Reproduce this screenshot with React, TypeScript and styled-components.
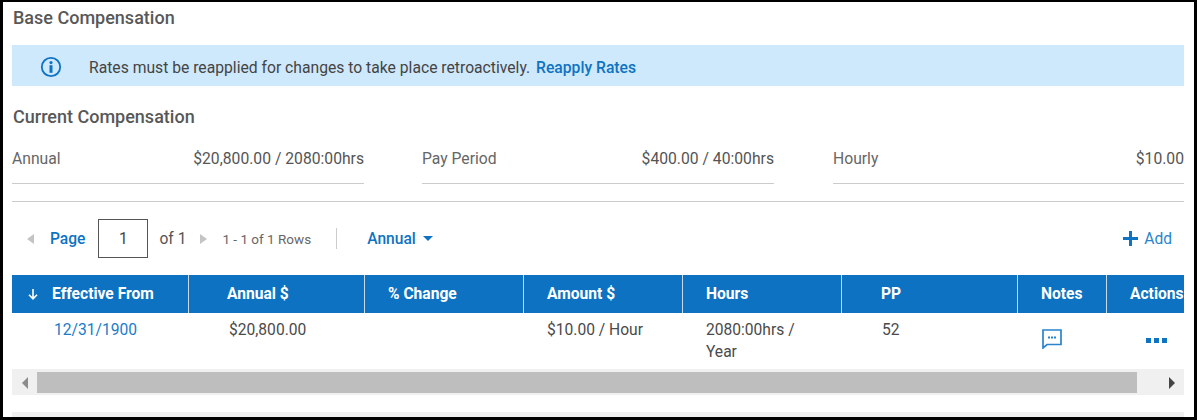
import { createGlobalStyle } from "styled-components";
import styled from "styled-components";

const GlobalStyle = createGlobalStyle`
    html, body {
        margin: 0;
        padding: 0;
        background: #fff;
    }
    body {
        font-family: Roboto, "Liberation Sans", sans-serif;
        color: #444;
    }
`;

const Frame = styled.div`
    box-sizing: border-box;
    width: 1197px;
    height: 420px;
    overflow: hidden;
    border: solid #000;
    border-width: 2px 3px 3px 3px;
    padding: 0 10px 0 9px;
    display: flex;
    flex-direction: column;
`;

const PageTitle = styled.h2`
    margin: 0;
    height: 33px;
    padding: 6px 0 0 1px;
    box-sizing: border-box;
    font-size: 18px;
    line-height: 20px;
    font-weight: 500;
    color: #585858;
`;

const Banner = styled.div`
    box-sizing: border-box;
    margin-top: 10px;
    height: 41px;
    background: #cee8fc;
    display: flex;
    align-items: center;
    padding: 3px 0 0 28px;
    font-size: 15.7px;
    color: #444;
`;

const BannerIcon = styled.svg`
    width: 22px;
    height: 22px;
    margin-right: 27px;
    flex: none;
`;

const LinkText = styled.a`
    color: #0e73c2;
    font-weight: ${props => (props.$strong ? 500 : 400)};
    text-decoration: none;
`;

const ReapplyLink = styled(LinkText)`
    margin-left: 2px;
`;

const SectionTitle = styled.h3`
    margin: 21px 0 0;
    padding-left: 1px;
    height: 20px;
    font-size: 18px;
    line-height: 20px;
    font-weight: 500;
    color: #585858;
`;

const Summary = styled.div`
    margin-top: 23px;
    display: grid;
    grid-template-columns: 352px 352px 352px;
    column-gap: 58px;
    width: 1172px;
    overflow: hidden;
    padding-bottom: 17px;
    border-bottom: 1px solid #ccc;
`;

const SummaryItem = styled.div`
    display: flex;
    justify-content: space-between;
    height: 33px;
    border-bottom: 1px solid #ccc;
    font-size: 15.7px;
    line-height: 18px;
    color: #666;
    &:last-child {
        margin-left: 1px;
    }
`;

const SummaryValue = styled.span`
    color: #555;
`;

const Toolbar = styled.div`
    height: 73px;
    display: flex;
    align-items: center;
    font-size: 15.6px;
    color: #555;
`;

const Arrow = styled.span`
    width: 0;
    height: 0;
    border-style: solid;
    border-width: 5px 0;
    border-color: transparent;
    flex: none;
    margin-left: ${props => props.$ml}px;
    ${props => props.$dir === "left"
        ? `border-right: 7px solid #c4c4c4;`
        : `border-left: 7px solid #c4c4c4;`}
`;

const PageLink = styled(LinkText)`
    margin-left: 16px;
`;

const PageInput = styled.div`
    box-sizing: border-box;
    width: 50px;
    height: 39px;
    margin-left: 13px;
    border: 1px solid #555;
    display: flex;
    align-items: center;
    justify-content: center;
    font-size: 15.6px;
    color: #444;
`;

const OfText = styled.span`
    margin-left: 11px;
`;

const RowsText = styled.span`
    margin-left: 15px;
    font-size: 13.5px;
    color: #666;
`;

const Separator = styled.div`
    width: 1px;
    height: 21px;
    background: #ccc;
    margin: 0 30px 0 25px;
`;

const Caret = styled.span`
    width: 0;
    height: 0;
    margin-left: 7px;
    border-style: solid;
    border-width: 5px 5.5px 0;
    border-color: #0e73c2 transparent transparent;
`;

const AddButton = styled.div`
    margin-left: auto;
    margin-right: 12px;
    display: flex;
    align-items: center;
    gap: 6px;
    color: #2a84cc;
`;

const TableWrap = styled.div`
    width: 1172px;
    overflow: hidden;
`;

const Cols = "177px 176px 159px 159px 159px 176px 89px 77px";

const HeaderRow = styled.div`
    display: grid;
    grid-template-columns: ${Cols};
    height: 38px;
    background: #0d72c1;
`;

const HeaderCell = styled.div`
    box-sizing: border-box;
    display: flex;
    align-items: center;
    gap: 13px;
    padding: 0 0 1px ${props => props.$pad}px;
    border-right: 1px solid #c9d9e6;
    font-size: 15.6px;
    font-weight: 700;
    color: #fff;
    white-space: nowrap;
    &:last-child {
        border-right: 0;
    }
`;

const BodyRow = styled.div`
    display: grid;
    grid-template-columns: ${Cols};
    height: 56px;
    font-size: 15.6px;
    line-height: 22px;
    color: #4a4a4a;
`;

const Cell = styled.div`
    box-sizing: border-box;
    padding: 6px 30px 0 ${props => props.$pad}px;
`;

const IconCell = styled.div`
    padding: ${props => props.$top}px 0 0 ${props => props.$pad}px;
`;

const DateLink = styled(LinkText)`
    color: #1a7cc9;
`;

const Dots = styled.div`
    display: flex;
    gap: 3px;
`;

const Dot = styled.span`
    width: 5px;
    height: 5px;
    background: #0e73c2;
`;

const Scrollbar = styled.div`
    box-sizing: border-box;
    height: 26px;
    padding-top: 1px;
    background: #f0f0f0;
    display: flex;
    align-items: center;
`;

const ScrollLeft = styled.div`
    width: 25px;
    display: flex;
    justify-content: center;
    flex: none;
`;

const ScrollThumb = styled.div`
    width: 1100px;
    height: 21px;
    background: #bebebe;
    flex: none;
`;

const ScrollRight = styled.div`
    flex: 1;
    display: flex;
    justify-content: flex-end;
    padding-right: 9px;
`;

const ScrollArrow = styled.span`
    width: 0;
    height: 0;
    border-style: solid;
    border-width: 6px 0;
    border-color: transparent;
    ${props => props.$dir === "left"
        ? `border-right: 6px solid #8c8c8c;`
        : `border-left: 6px solid #444;`}
`;

const BottomStrip = styled.div`
    margin-top: 17px;
    height: 5px;
    width: 1172px;
    background: #f0f0f0;
`;

const columns = [
    { label: "Annual $", pad: 38 },
    { label: "% Change", pad: 23 },
    { label: "Amount $", pad: 23 },
    { label: "Hours", pad: 23 },
    { label: "PP", pad: 39 },
    { label: "Notes", pad: 23 },
    { label: "Actions", pad: 23 },
];

const App = () => {
    return (
        <Frame>
            <GlobalStyle />
            <PageTitle>Base Compensation</PageTitle>
            <Banner>
                <BannerIcon viewBox="0 0 22 22" fill="none">
                    <circle cx="11" cy="11" r="9.2" stroke="#0e73c2" strokeWidth="1.8" />
                    <circle cx="11" cy="6.6" r="1.6" fill="#0e73c2" />
                    <rect x="9.5" y="9.2" width="3" height="7.6" fill="#0e73c2" />
                </BannerIcon>
                <span>
                    Rates must be reapplied for changes to take place retroactively.{" "}
                    <ReapplyLink $strong>Reapply Rates</ReapplyLink>
                </span>
            </Banner>
            <SectionTitle>Current Compensation</SectionTitle>
            <Summary>
                <SummaryItem>
                    <span>Annual</span>
                    <SummaryValue>$20,800.00 / 2080:00hrs</SummaryValue>
                </SummaryItem>
                <SummaryItem>
                    <span>Pay Period</span>
                    <SummaryValue>$400.00 / 40:00hrs</SummaryValue>
                </SummaryItem>
                <SummaryItem>
                    <span>Hourly</span>
                    <SummaryValue>$10.00</SummaryValue>
                </SummaryItem>
            </Summary>
            <Toolbar>
                <Arrow $dir="left" $ml={15} />
                <PageLink $strong>Page</PageLink>
                <PageInput>1</PageInput>
                <OfText>of 1</OfText>
                <Arrow $dir="right" $ml={14} />
                <RowsText>1 - 1 of 1 Rows</RowsText>
                <Separator />
                <LinkText $strong>Annual</LinkText>
                <Caret />
                <AddButton>
                    <svg width="15" height="15" viewBox="0 0 15 15">
                        <path d="M6 0h3v6h6v3H9v6H6V9H0V6h6z" fill="#0e73c2" />
                    </svg>
                    Add
                </AddButton>
            </Toolbar>
            <TableWrap>
                <HeaderRow>
                    <HeaderCell $pad={15}>
                        <svg width="12" height="12" viewBox="0 0 12 12" fill="none">
                            <path d="M6 1v9.5M2 6.8l4 4 4-4" stroke="#fff" strokeWidth="1.6" />
                        </svg>
                        Effective From
                    </HeaderCell>
                    {columns.map(({ label, pad }) => (
                        <HeaderCell key={label} $pad={pad}>
                            {label}
                        </HeaderCell>
                    ))}
                </HeaderRow>
                <BodyRow>
                    <Cell $pad={42}>
                        <DateLink>12/31/1900</DateLink>
                    </Cell>
                    <Cell $pad={40}>$20,800.00</Cell>
                    <Cell $pad={24} />
                    <Cell $pad={23}>$10.00 / Hour</Cell>
                    <Cell $pad={23}>2080:00hrs / Year</Cell>
                    <Cell $pad={40}>52</Cell>
                    <IconCell $pad={24} $top={16}>
                        <svg width="20" height="20" viewBox="0 0 20 20" fill="none">
                            <path d="M1 1h18v14.5H5L1 19z" stroke="#2a84cc" strokeWidth="1.7" />
                            <rect x="6" y="7.5" width="2" height="2" fill="#2a84cc" />
                            <rect x="9" y="7.5" width="2" height="2" fill="#2a84cc" />
                            <rect x="12" y="7.5" width="2" height="2" fill="#2a84cc" />
                        </svg>
                    </IconCell>
                    <IconCell $pad={39} $top={25}>
                        <Dots>
                            <Dot />
                            <Dot />
                            <Dot />
                        </Dots>
                    </IconCell>
                </BodyRow>
                <Scrollbar>
                    <ScrollLeft>
                        <ScrollArrow $dir="left" />
                    </ScrollLeft>
                    <ScrollThumb />
                    <ScrollRight>
                        <ScrollArrow $dir="right" />
                    </ScrollRight>
                </Scrollbar>
            </TableWrap>
            <BottomStrip />
        </Frame>
    );
};

export default App;
